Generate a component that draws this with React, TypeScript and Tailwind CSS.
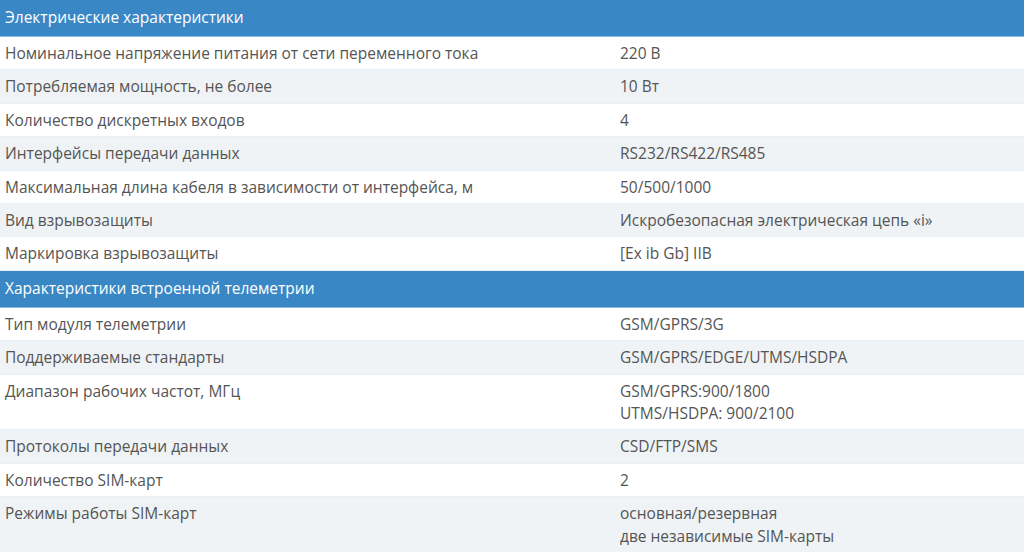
const sections = [
  {
    title: "Электрические характеристики",
    rows: [
      ["Номинальное напряжение питания от сети переменного тока", ["220 В"]],
      ["Потребляемая мощность, не более", ["10 Вт"]],
      ["Количество дискретных входов", ["4"]],
      ["Интерфейсы передачи данных", ["RS232/RS422/RS485"]],
      ["Максимальная длина кабеля в зависимости от интерфейса, м", ["50/500/1000"]],
      ["Вид взрывозащиты", ["Искробезопасная электрическая цепь «i»"]],
      ["Маркировка взрывозащиты", ["[Ex ib Gb] IIB"]],
    ],
  },
  {
    title: "Характеристики встроенной телеметрии",
    rows: [
      ["Тип модуля телеметрии", ["GSM/GPRS/3G"]],
      ["Поддерживаемые стандарты", ["GSM/GPRS/EDGE/UTMS/HSDPA"]],
      ["Диапазон рабочих частот, МГц", ["GSM/GPRS:900/1800", "UTMS/HSDPA: 900/2100"]],
      ["Протоколы передачи данных", ["CSD/FTP/SMS"]],
      ["Количество SIM-карт", ["2"]],
      ["Режимы работы SIM-карт", ["основная/резервная", "две независимые SIM-карты"]],
    ],
  },
] as const;

export default function App() {
  return (
    <div className="w-[1024px] h-[552px] overflow-hidden bg-white font-['Open_Sans',sans-serif] text-[15.5px] leading-[22.4px] text-[#555]">
      {sections.map((s) => (
        <div key={s.title}>
          <div className="h-[37px] bg-[#3a87c6] border-b border-[#8dbde3] px-[5px] pt-[6px] text-[15.5px] text-white">
            {s.title}
          </div>
          {s.rows.map(([label, values], i) => (
            <div
              key={label}
              className={`flex py-[5px] border-b border-[#e9eff4] ${i % 2 === 0 ? "bg-white" : "bg-[#eff3f6]"}`}
            >
              <div className="w-[620px] shrink-0 px-[5px]">{label}</div>
              <div className="flex-1">
                {values.map((v) => (
                  <div key={v}>{v}</div>
                ))}
              </div>
            </div>
          ))}
        </div>
      ))}
    </div>
  );
}
